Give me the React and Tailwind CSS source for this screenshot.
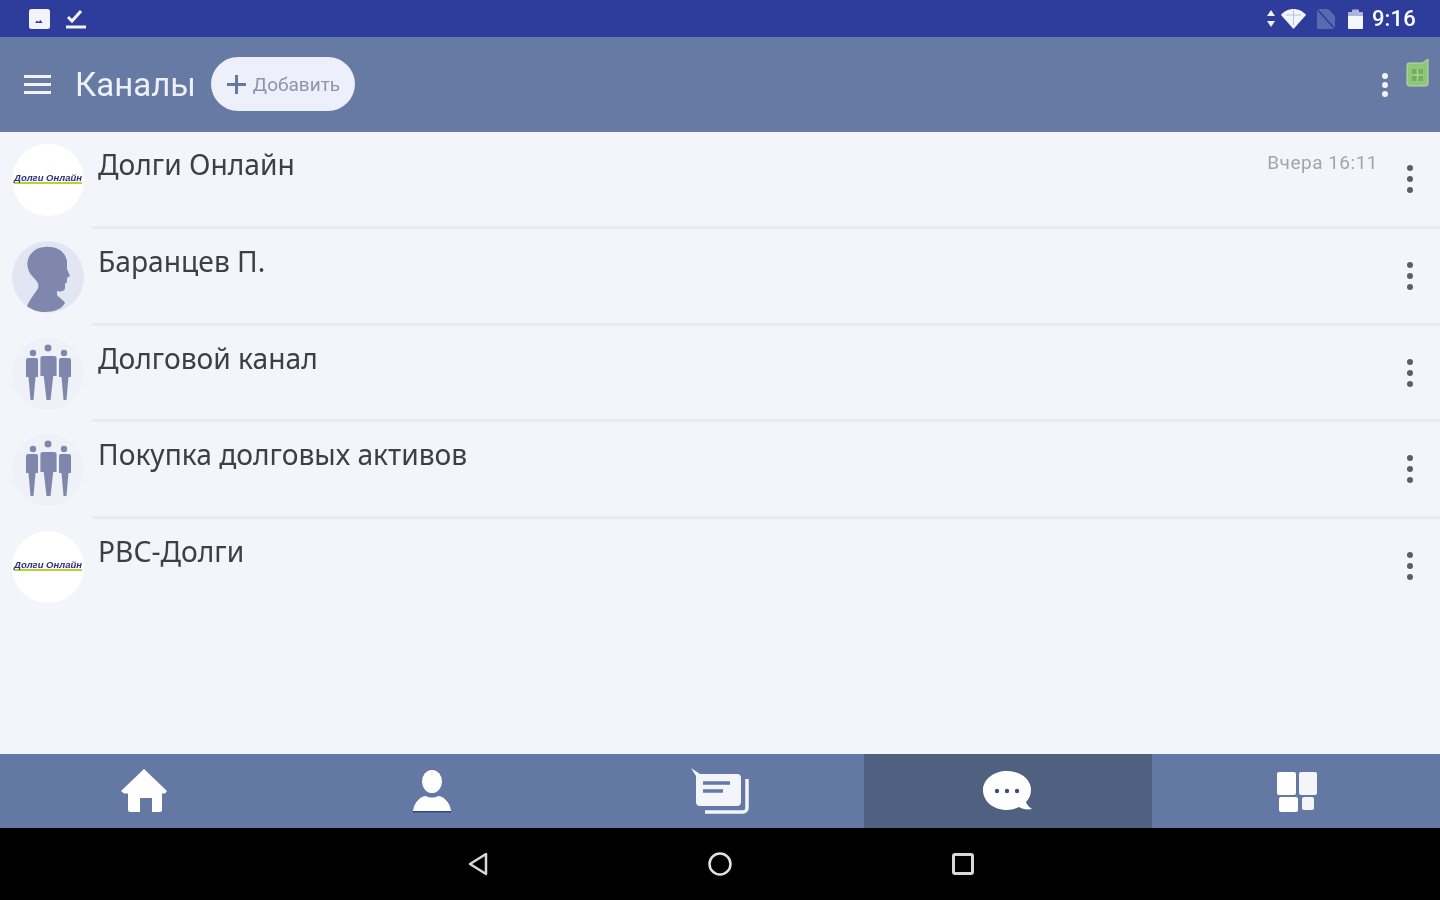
import React from 'react';

// the reference is an upscaled screenshot, so text and icons are a little soft
const soft = 'blur-[0.7px]';

const channels = [
  { name: 'Долги Онлайн', avatar: 'logo', time: 'Вчера 16:11' },
  { name: 'Баранцев П.', avatar: 'person' },
  { name: 'Долговой канал', avatar: 'group' },
  { name: 'Покупка долговых активов', avatar: 'group' },
  { name: 'РВС-Долги', avatar: 'logo', last: true },
];

const Dots = ({ className }) => (
  <div className={`flex flex-col items-center ${soft} ${className}`}>
    <span className="w-[6px] h-[6px] rounded-full bg-current" />
    <span className="w-[6px] h-[6px] rounded-full bg-current" />
    <span className="w-[6px] h-[6px] rounded-full bg-current" />
  </div>
);

function LogoAvatar() {
  return (
    <div className="w-[72px] h-[72px] rounded-full bg-white flex flex-col items-center justify-center overflow-hidden">
      <span className="text-[9.500px] leading-[9px] font-bold italic text-[#2d2f7f] whitespace-nowrap border-b-2 border-[#b5d334] font-['Liberation_Sans',sans-serif] -mt-[3px]">
        Долги Онлайн
      </span>
    </div>
  );
}

function PersonAvatar() {
  return (
    <div className="w-[72px] h-[72px] rounded-full bg-[#e2e6f3] overflow-hidden">
      <svg viewBox="0 0 72 72" className="w-full h-full">
        <path
          fill="#7f87ad"
          d="M33 6C44 5 53 10 55 20L55 28L58 35L55 37L55 41L53 43L53 47C53 50 49 51 45 50L45 54C47 57 52 59 53 62C50 68 42 71 33 71C26 71 19 70 15 68C14 64 20 56 25 49C28 44 26 41 21 36C15 30 14 22 17 16C20 10 26 6 33 6Z"
        />
      </svg>
    </div>
  );
}

function GroupAvatar() {
  const man = 'M-6 2q0-2 2-2h8q2 0 2 2v17h-2.500L1.500 42h-3L-3.500 19H-6z';
  return (
    <div className="w-[72px] h-[72px] rounded-full bg-[#eff1f9]">
      <svg viewBox="0 0 72 72" className="w-full h-full" fill="#7f87ad">
        <circle cx="36" cy="10" r="3.500" />
        <circle cx="21" cy="15" r="3.200" />
        <circle cx="52" cy="15" r="3.200" />
        <path transform="translate(20 20)" d={man} />
        <path transform="translate(53 20)" d={man} />
        <path transform="translate(36.500 18) scale(1.350 1.050)" d={man} />
      </svg>
    </div>
  );
}

function ChannelRow({ channel }) {
  return (
    <div className="h-[96.750px] flex items-start pl-3">
      <div className={`mt-3 shrink-0 ${soft}`}>
        {channel.avatar === 'logo' && <LogoAvatar />}
        {channel.avatar === 'person' && <PersonAvatar />}
        {channel.avatar === 'group' && <GroupAvatar />}
      </div>
      <div className={`ml-2 flex-1 h-full flex items-start pl-[6px] border-b-[3px] ${channel.last ? 'border-transparent' : 'border-[#e9ebf1]'}`}>
        <div className={`mt-[13px] flex-1 text-[28.200px] leading-[38px] text-[#3d4043] font-['Noto_Sans',sans-serif] ${soft}`}>{channel.name}</div>
        {channel.time && (
          <div className={`mt-[20px] mr-[2px] text-[19px] leading-[22px] tracking-[0.5px] text-[#a3a5aa] ${soft}`}>{channel.time}</div>
        )}
        <Dots className="w-[60px] gap-[5px] mt-[33px] text-[#5b5e68]" />
      </div>
    </div>
  );
}

function StatusBar() {
  return (
    <div className="h-[37px] bg-[#2e3d9b] flex items-center pl-[29px] pr-6 text-white shrink-0">
      <svg width="21" height="20" viewBox="0 0 21 20" className={soft}>
        <rect width="21" height="20" rx="2.500" fill="#f2f3fb" />
        <path d="M6 14l2-2.500 1.500 1.500 2-2 2 3z" fill="#2e3d9b" />
      </svg>
      <svg width="20" height="21" viewBox="0 0 20 21" className={`ml-4 ${soft}`} fill="none" stroke="#f2f3fb" strokeWidth="3">
        <path d="M2 9l4 4 9-10" />
        <path d="M0 19h20" />
      </svg>
      <div className={`ml-auto flex items-center ${soft}`}>
        <svg width="8" height="17" viewBox="0 0 8 17" fill="#eef0fa">
          <path d="M4 0l4 6H0zM4 17l4-6H0z" />
        </svg>
        <svg width="25" height="20" viewBox="0 0 25 20" className="ml-[6px]" fill="#f2f3fb">
          <path d="M12.500 20L0 6c3-4 8-6 12.500-6S22 2 25 6z" />
          <path d="M5 6h15M12.500 1v15" stroke="#aab2dc" strokeWidth="0.800" />
        </svg>
        <svg width="20" height="20" viewBox="0 0 20 20" className="ml-[10px]">
          <path d="M1 0h11l7 7v13H1z" fill="#5b68b2" />
          <path d="M1 0l18 20" stroke="#2e3d9b" strokeWidth="1.500" />
        </svg>
        <svg width="15" height="21" viewBox="0 0 15 21" className="ml-[12px]">
          <path d="M4 2.500a1 1 0 0 1 1-1h5a1 1 0 0 1 1 1V4h3a1 1 0 0 1 1 1v5H0V5a1 1 0 0 1 1-1h3z" fill="#aeb5dd" />
          <path d="M0 8h15v12a1 1 0 0 1-1 1H1a1 1 0 0 1-1-1z" fill="#f5f6fc" />
        </svg>
        <span className="ml-[9px] text-[22px] leading-none font-medium tracking-[0.2px]">9:16</span>
      </div>
    </div>
  );
}

function Header() {
  return (
    <div className="h-[95px] bg-[#667aa3] flex items-center pl-6 shrink-0 relative">
      <div className={`w-[27px] flex flex-col gap-[5px] ${soft}`}>
        <span className="h-[3px] bg-[#f2f3fa]" />
        <span className="h-[3px] bg-[#f2f3fa]" />
        <span className="h-[3px] bg-[#f2f3fa]" />
      </div>
      <h1 className={`ml-[24px] text-[33px] leading-none text-[#eef0f7] font-normal ${soft}`}>Каналы</h1>
      <button className={`ml-[15px] mb-[2px] pt-[2px] w-[144px] h-[54px] rounded-full bg-[#edeffa] flex items-center pl-4 ${soft}`}>
        <svg width="19" height="19" viewBox="0 0 19 19" stroke="#66789e" strokeWidth="3">
          <path d="M9.500 0v19M0 9.500h19" />
        </svg>
        <span className="ml-[7px] text-[19px] leading-none text-[#8d95ad]">Добавить</span>
      </button>
      <Dots className="ml-auto gap-[3px] text-[#f2f3fa] mr-[52px]" />
      <svg width="23" height="28" viewBox="0 0 23 28" className={`absolute left-[1406px] top-[22px] ${soft}`}>
        <path d="M3 4h13l6-4v25a2 2 0 0 1-2 2H3a2 2 0 0 1-2-2V6a2 2 0 0 1 2-2z" fill="#8fc77a" stroke="#b6dca6" strokeWidth="1" />
        <rect x="6" y="10" width="11" height="12" fill="#73ad5f" />
        <path d="M11.500 10v12M6 16h11" stroke="#a7d894" strokeWidth="1.500" />
      </svg>
    </div>
  );
}

function BottomNav() {
  return (
    <div className="h-[74px] bg-[#6378a3] grid grid-cols-5 shrink-0">
      <div className="flex items-center justify-center">
        <svg width="46" height="44" viewBox="0 0 46 44" fill="#fff" className={soft}>
          <path d="M23 0l23 22-2 2.500h-3V41a2 2 0 0 1-2 2h-8V29h-12v14H9a2 2 0 0 1-2-2V24.500H3L0 22z" />
        </svg>
      </div>
      <div className="flex items-center justify-center">
        <svg width="38" height="43" viewBox="0 0 38 43" className={`mt-[1px] ${soft}`}>
          <ellipse cx="19" cy="11.500" rx="10" ry="11.500" fill="#fff" />
          <path d="M0 41c1-9 8-15 13-15 3 2 9 2 12 0 5 0 12 6 13 15z" fill="#fff" />
          <path d="M0 41h38v1.500H0z" fill="#2f4688" />
        </svg>
      </div>
      <div className="flex items-center justify-center">
        <svg width="58" height="46" viewBox="0 0 58 46" className={`mt-[-1px] ${soft}`}>
          <path d="M14 44h38a4 4 0 0 0 4-4V11" fill="none" stroke="#f3f5fb" strokeWidth="3.500" />
          <path d="M0 0l9 6h37a4 4 0 0 1 4 4v24a4 4 0 0 1-4 4H9a4 4 0 0 1-4-4V8z" fill="#f3f5fb" />
          <path d="M12 15h27M12 23h20" stroke="#6378a3" strokeWidth="3.500" />
        </svg>
      </div>
      <div className="flex items-center justify-center bg-[#4f6080]">
        <svg width="50" height="41" viewBox="0 0 50 41" className={`mt-[1px] ${soft}`}>
          <path d="M24 0c13 0 24 8 24 19 0 5-2 9-5 12 1 3 3 5 6 7-5 1-10 0-13-2-4 2-8 3-12 3C10 39 0 30 0 19S11 0 24 0z" fill="#fff" />
          <circle cx="14" cy="20" r="2.200" fill="#3f5078" />
          <circle cx="24" cy="20" r="2.200" fill="#3f5078" />
          <circle cx="34" cy="20" r="2.200" fill="#3f5078" />
        </svg>
      </div>
      <div className="flex items-center justify-center">
        <svg width="40" height="40" viewBox="0 0 40 40" fill="#fff" className={`ml-[2px] mt-[2px] ${soft}`}>
          <rect x="0" y="0" width="19" height="23" rx="2" />
          <rect x="22" y="0" width="18" height="23" rx="2" fillOpacity="0.93" />
          <rect x="2" y="25" width="19" height="15" rx="2" />
          <rect x="25" y="25" width="12" height="13" rx="2" fillOpacity="0.93" />
        </svg>
      </div>
    </div>
  );
}

function SystemBar() {
  return (
    <div className="h-[72px] bg-black grid grid-cols-[1fr_auto_1fr] items-center shrink-0">
      <div className="flex justify-end">
        <svg width="22" height="24" viewBox="0 0 22 24" fill="none" stroke="#d8d8d8" strokeWidth="2.500" className={soft}>
          <path d="M19 2v20L3 12z" strokeLinejoin="round" />
        </svg>
      </div>
      <svg width="24" height="24" viewBox="0 0 24 24" fill="none" stroke="#e2e2e2" strokeWidth="2.500" className={`mx-[219px] ${soft}`}>
        <circle cx="12" cy="12" r="10.500" />
      </svg>
      <div className="flex justify-start">
        <div className={`ml-[1px] w-[22px] h-[22px] rounded-[3px] border-[3px] border-[#d8d8d8] ${soft}`} />
      </div>
    </div>
  );
}

export default function App() {
  return (
    <div className="w-[1440px] h-[900px] overflow-hidden flex flex-col bg-[#f3f5fb] font-['Roboto',sans-serif]">
      <StatusBar />
      <Header />
      <div className="flex-1">
        {channels.map((c) => (
          <ChannelRow key={c.name} channel={c} />
        ))}
      </div>
      <BottomNav />
      <SystemBar />
    </div>
  );
}
